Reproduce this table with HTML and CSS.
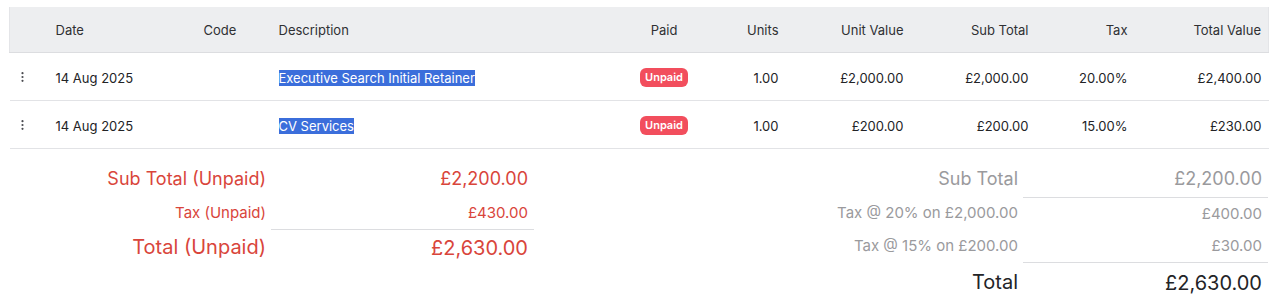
FILE: index.html
```html
<!DOCTYPE html>
<html lang="en">
<head>
<meta charset="utf-8">
<title>Invoice lines</title>
<link rel="stylesheet" href="styles.css">
</head>
<body>
<div class="page">
  <table class="lines">
    <colgroup>
      <col class="c-act"><col class="c-date"><col class="c-code"><col class="c-desc"><col class="c-paid"><col class="c-units"><col class="c-uv"><col class="c-sub"><col class="c-tax"><col class="c-total">
    </colgroup>
    <thead>
      <tr>
        <th></th>
        <th class="left">Date</th>
        <th class="left">Code</th>
        <th class="left">Description</th>
        <th class="center">Paid</th>
        <th class="right">Units</th>
        <th class="right">Unit Value</th>
        <th class="right">Sub Total</th>
        <th class="right">Tax</th>
        <th class="right">Total Value</th>
      </tr>
    </thead>
    <tbody>
      <tr>
        <td class="act"><svg class="kebab" width="3" height="10" viewBox="0 0 3 10"><circle cx="1.5" cy="1.2" r="1.1"/><circle cx="1.5" cy="5" r="1.1"/><circle cx="1.5" cy="8.8" r="1.1"/></svg></td>
        <td class="left">14 Aug 2025</td>
        <td class="left"></td>
        <td class="left"><span class="sel">Executive Search Initial Retainer</span></td>
        <td class="center"><span class="badge">Unpaid</span></td>
        <td class="right">1.00</td>
        <td class="right">£2,000.00</td>
        <td class="right">£2,000.00</td>
        <td class="right">20.00%</td>
        <td class="right">£2,400.00</td>
      </tr>
      <tr>
        <td class="act"><svg class="kebab" width="3" height="10" viewBox="0 0 3 10"><circle cx="1.5" cy="1.2" r="1.1"/><circle cx="1.5" cy="5" r="1.1"/><circle cx="1.5" cy="8.8" r="1.1"/></svg></td>
        <td class="left">14 Aug 2025</td>
        <td class="left"></td>
        <td class="left"><span class="sel">CV Services</span></td>
        <td class="center"><span class="badge">Unpaid</span></td>
        <td class="right">1.00</td>
        <td class="right">£200.00</td>
        <td class="right">£200.00</td>
        <td class="right">15.00%</td>
        <td class="right">£230.00</td>
      </tr>
    </tbody>
  </table>

  <div class="summary">
    <table class="sum unpaid">
      <colgroup><col class="s-label-l"><col class="s-val-l"></colgroup>
      <tr class="r-sub"><td class="lbl">Sub Total (Unpaid)</td><td class="val">£2,200.00</td></tr>
      <tr class="r-tax"><td class="lbl">Tax (Unpaid)</td><td class="val">£430.00</td></tr>
      <tr class="r-total"><td class="lbl">Total (Unpaid)</td><td class="val line-top">£2,630.00</td></tr>
    </table>

    <table class="sum totals">
      <colgroup><col class="s-label-r"><col class="s-val-r"></colgroup>
      <tr class="r-sub"><td class="lbl">Sub Total</td><td class="val">£2,200.00</td></tr>
      <tr class="r-tax"><td class="lbl">Tax @ 20% on £2,000.00</td><td class="val line-top">£400.00</td></tr>
      <tr class="r-tax"><td class="lbl">Tax @ 15% on £200.00</td><td class="val">£30.00</td></tr>
      <tr class="r-total"><td class="lbl">Total</td><td class="val line-top">£2,630.00</td></tr>
    </table>
  </div>
</div>
</body>
</html>
```

FILE: styles.css
```css
* { box-sizing: border-box; }

html, body {
  margin: 0;
  padding: 0;
  background: #ffffff;
}

body {
  font-family: Inter, "Noto Sans", "Liberation Sans", sans-serif;
  color: #222326;
}

.page {
  padding: 7px 19px 0 9px;
}

/* ---------- line items table ---------- */
.lines {
  width: 1259px;
  border-collapse: collapse;
  table-layout: fixed;
  font-size: 13px;
}

.c-act   { width: 39px; }
.c-date  { width: 148px; }
.c-code  { width: 75px; }
.c-desc  { width: 349px; }
.c-paid  { width: 87px; }
.c-units { width: 78px; }
.c-uv    { width: 125px; }
.c-sub   { width: 125px; }
.c-tax   { width: 99px; }
.c-total { width: 134px; }

.lines thead tr {
  background: #edeef0;
}

.lines th {
  height: 45px;
  padding: 2px 7px 0;
  font-weight: 400;
  color: #2f3033;
  border-bottom: 1px solid #dcdde0;
  white-space: nowrap;
}

.lines th:first-child { border-left: 1px solid #e4e5e8; }
.lines th:last-child { border-right: 1px solid #e4e5e8; }

.lines td {
  height: 48px;
  padding: 3px 7px 0;
  border-bottom: 1px solid #e2e3e6;
  white-space: nowrap;
  color: #222326;
}

.left   { text-align: left; }
.right  { text-align: right; }
.center { text-align: center; }

.lines td.act {
  padding: 2px 0 0 11px;
}

.kebab {
  display: block;
  fill: #4a4b50;
}

.sel {
  background: #3b6edb;
  color: #ffffff;
}

.lines td.center {
  padding-top: 2px;
}

.badge {
  display: inline-block;
  background: #f24e5d;
  color: #ffffff;
  font-size: 11px;
  font-weight: 600;
  line-height: 19px;
  padding: 0 5px;
  border-radius: 6px;
  vertical-align: middle;
}

/* ---------- summary ---------- */
.summary {
  display: flex;
  justify-content: space-between;
  align-items: flex-start;
  margin-top: 12px;
}

.sum {
  border-collapse: collapse;
  table-layout: fixed;
}

.s-label-l { width: 262px; }
.s-val-l   { width: 263px; }
.s-label-r { width: 250px; }
.s-val-r   { width: 245px; }

.sum td {
  text-align: right;
  padding: 6px 6px 6px 0;
  white-space: nowrap;
}

.sum td.lbl { padding-right: 5px; }

.sum .line-top {
  border-top: 1px solid #dcdde0;
}

.r-sub td {
  font-size: 18px;
  line-height: 24px;
}

.r-tax td {
  font-size: 15px;
  line-height: 20px;
}

.r-total td {
  font-size: 20px;
  line-height: 28px;
}

.unpaid td {
  color: #d9453b;
}

.unpaid .r-total td {
  padding-top: 4px;
}

.totals td {
  color: #9a9a9d;
}

.totals .r-total td {
  color: #232427;
}
```
